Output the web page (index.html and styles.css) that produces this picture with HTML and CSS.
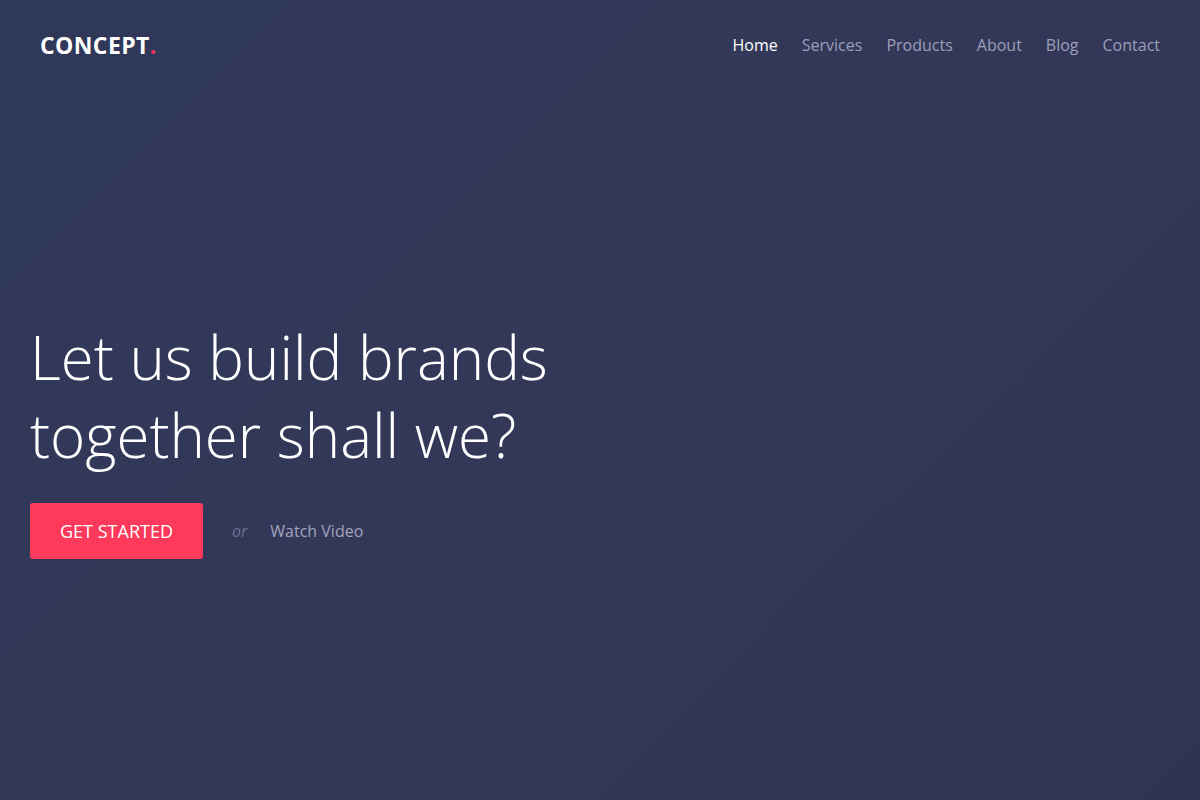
FILE: index.html
```html
<!DOCTYPE html>
<html>
<head>
<meta charset="utf-8">
<link rel="stylesheet" href="styles.css">
</head>
<body>
<div class="hero">
  <header class="topbar">
    <div class="logo">CONCEPT<span class="dot">.</span></div>
    <nav class="nav">
      <a class="nav-link active">Home</a>
      <a class="nav-link">Services</a>
      <a class="nav-link">Products</a>
      <a class="nav-link">About</a>
      <a class="nav-link">Blog</a>
      <a class="nav-link">Contact</a>
    </nav>
  </header>
  <main class="content">
    <h1 class="title">Let us build brands<br>together shall we?</h1>
    <div class="actions">
      <a class="btn">GET STARTED</a>
      <span class="or">or</span>
      <a class="watch">Watch Video</a>
    </div>
  </main>
</div>
</body>
</html>
```
FILE: styles.css
```css
html, body {
  margin: 0;
  padding: 0;
  height: 100%;
}
body {
  font-family: "Open Sans", "Liberation Sans", sans-serif;
  background: #323757;
  color: #fff;
}
.hero {
  height: 800px;
  background: linear-gradient(135deg, #2f3859 0%, #343858 50%, #313353 100%);
  display: flex;
  flex-direction: column;
}
.topbar {
  display: flex;
  justify-content: space-between;
  align-items: center;
  padding: 30px 40px 0 40px;
  height: 30px;
}
.logo {
  font-weight: 700;
  font-size: 23px;
  letter-spacing: 0.4px;
  color: #fff;
}
.dot { color: #f5365c; }
.nav {
  display: flex;
  gap: 24px;
}
.nav-link {
  font-size: 16px;
  color: #9a9fba;
  text-decoration: none;
}
.nav-link.active { color: #fff; }
.content {
  padding: 0 30px;
  margin-top: 258px;
}
.title {
  margin: 0;
  font-weight: 300;
  font-size: 60px;
  line-height: 78px;
  color: #fff;
}
.actions {
  display: flex;
  align-items: center;
  margin-top: 29px;
}
.btn {
  display: flex;
  align-items: center;
  justify-content: center;
  width: 173px;
  height: 56px;
  background: #fd3a5c;
  color: #fff;
  border-radius: 3px;
  font-size: 18px;
  font-weight: 400;
  text-decoration: none;
}
.or {
  margin-left: 29px;
  font-style: italic;
  color: #6e7391;
  font-size: 16px;
}
.watch {
  margin-left: 23px;
  color: #a0a4bd;
  font-size: 16px;
}
```
